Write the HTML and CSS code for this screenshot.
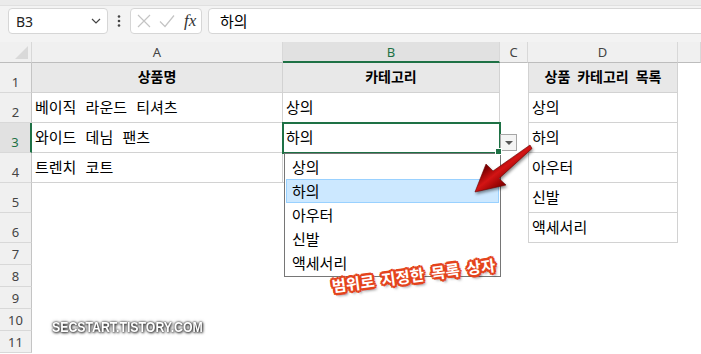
FILE: index.html
```html
<!DOCTYPE html>
<html lang="ko">
<head>
    <meta charset="UTF-8">
    <meta name="viewport" content="width=device-width, initial-scale=1.0">
    <title>데이터 유효성 검사 - 목록</title>
    <link rel="stylesheet" href="styles.css">
</head>
<body>

    <!-- 이름 상자 + 수식 입력줄 -->
    <div class="topbar">
        <div class="namebox">
            <span>B3</span>
            <svg width="10" height="6" viewBox="0 0 10 6"><path d="M1 1 L5 5 L9 1" fill="none" stroke="#444" stroke-width="1.2"/></svg>
        </div>
        <div class="dots">
            <svg width="4" height="12" viewBox="0 0 4 12"><circle cx="2" cy="1.5" r="1.3" fill="#444"/><circle cx="2" cy="6" r="1.3" fill="#444"/><circle cx="2" cy="10.5" r="1.3" fill="#444"/></svg>
        </div>
        <div class="fxbox">
            <svg width="14" height="14" viewBox="0 0 14 14"><path d="M1 1 L13 13 M13 1 L1 13" stroke="#c4c4c4" stroke-width="1.2"/></svg>
            <svg width="16" height="14" viewBox="0 0 16 14"><path d="M1 7.5 L6 12.5 L15 1.5" fill="none" stroke="#c4c4c4" stroke-width="1.2"/></svg>
            <span class="fx">fx</span>
        </div>
        <div class="formula">하의</div>
    </div>

    <!-- 시트 -->
    <div class="sheet">
        <div class="corner"><span class="tri"></span></div>
        <div class="colh">A</div>
        <div class="colh sel">B</div>
        <div class="colh">C</div>
        <div class="colh">D</div>
        <div class="colh"></div>

        <div class="rowh">1</div>
        <div class="cell t th">상품명</div>
        <div class="cell t th">카테고리</div>
        <div class="cell"></div>
        <div class="cell t d th">상품 카테고리 목록</div>
        <div class="cell"></div>

        <div class="rowh">2</div>
        <div class="cell t">베이직 라운드 티셔츠</div>
        <div class="cell t">상의</div>
        <div class="cell"></div>
        <div class="cell t d">상의</div>
        <div class="cell"></div>

        <div class="rowh sel">3</div>
        <div class="cell t">와이드 데님 팬츠</div>
        <div class="cell t active">하의
            <span class="dd-btn"></span>
            <ul class="dd-list">
                <li>상의</li>
                <li class="hover">하의</li>
                <li>아우터</li>
                <li>신발</li>
                <li>액세서리</li>
            </ul>
        </div>
        <div class="cell"></div>
        <div class="cell t d">하의</div>
        <div class="cell"></div>

        <div class="rowh">4</div>
        <div class="cell t">트렌치 코트</div>
        <div class="cell t"></div>
        <div class="cell"></div>
        <div class="cell t d">아우터</div>
        <div class="cell"></div>

        <div class="rowh">5</div>
        <div class="cell span3"></div>
        <div class="cell t d">신발</div>
        <div class="cell"></div>

        <div class="rowh">6</div>
        <div class="cell span3"></div>
        <div class="cell t d">액세서리</div>
        <div class="cell"></div>

        <div class="rowh">7</div><div class="cell span5"></div>
        <div class="rowh">8</div><div class="cell span5"></div>
        <div class="rowh">9</div><div class="cell span5"></div>
        <div class="rowh">10</div><div class="cell span5"></div>
        <div class="rowh">11</div><div class="cell span5"></div>
    </div>

    <!-- 설명용 화살표 -->
    <svg class="arrow" width="701" height="354" viewBox="0 0 701 354">
        <defs>
            <linearGradient id="red" x1="489" y1="166" x2="503" y2="184" gradientUnits="userSpaceOnUse">
                <stop offset="0" stop-color="#7d0000"/>
                <stop offset="0.45" stop-color="#d41414"/>
                <stop offset="1" stop-color="#8a0000"/>
            </linearGradient>
        </defs>
        <polygon points="530,145 493,171 486,164 475,192 506,185 499,178.5 532,148.5" fill="url(#red)" stroke="#6a0000" stroke-width="0.6" stroke-linejoin="round"/>
    </svg>

    <div class="note">범위로 지정한 목록 상자</div>
    <div class="watermark">SECSTART.TISTORY.COM</div>

</body>
</html>
```

FILE: styles.css
```css
body {
    margin: 0;
    width: 701px;
    height: 354px;
    overflow: hidden;
    position: relative;
    background-color: #fff;
    font-family: "Noto Sans CJK KR", "Noto Sans", sans-serif;
    color: #000;
}

/* 수식 입력줄 */
.topbar {
    height: 42px;
    box-sizing: border-box;
    padding: 8px 0 0 8px;
    display: flex;
    align-items: flex-start;
    background: linear-gradient(#ebebeb 0, #ebebeb 5px, #e0e0e0 5px, #e0e0e0 6px, #f3f3f3 6px);
}

.namebox, .fxbox, .formula {
    height: 26px;
    box-sizing: border-box;
    background-color: #fff;
    border: 1px solid #d6d6d6;
    border-radius: 4px;
}

.namebox {
    width: 100px;
    display: flex;
    align-items: center;
    justify-content: space-between;
    padding: 0 6px 0 7px;
    font-family: "Noto Sans", sans-serif;
    font-size: 14px;
    color: #222;
}

.dots {
    width: 22px;
    height: 26px;
    display: flex;
    align-items: center;
    justify-content: center;
}

.fxbox {
    width: 72px;
    display: flex;
    align-items: center;
    padding-left: 6px;
    gap: 8px;
}

.fx {
    font-family: "Liberation Serif", serif;
    font-style: italic;
    font-size: 17px;
    color: #333;
    margin-left: 1px;
}

.formula {
    flex: 1;
    margin-left: 6px;
    margin-right: -8px;
    padding-left: 11px;
    font-size: 15px;
    line-height: 24px;
}

/* 시트 격자 */
.sheet {
    display: grid;
    grid-template-columns: 32px 251px 217px 28px 150px 23px;
    grid-template-rows: 21px repeat(6, 30px) repeat(5, 22px);
}

.corner, .colh, .rowh {
    box-sizing: border-box;
    background-color: #f0f0f0;
    font-family: "Noto Sans", sans-serif;
    font-size: 13px;
    color: #444;
}

.corner {
    border-right: 1px solid #d8d8d8;
    border-bottom: 1px solid #bdbdbd;
    position: relative;
}

.tri {
    position: absolute;
    right: 3px;
    bottom: 3px;
    width: 0;
    height: 0;
    border-left: 13px solid transparent;
    border-bottom: 13px solid #d9d9d9;
}

.colh {
    border-right: 1px solid #d8d8d8;
    border-bottom: 1px solid #bdbdbd;
    display: flex;
    align-items: center;
    justify-content: center;
    line-height: 16px;
}

.colh.sel {
    background-color: #e1e1e1;
    border-bottom: 2px solid #1e7145;
    color: #1e7145;
}

.rowh {
    border-right: 1px solid #c4c4c4;
    border-bottom: 1px solid #d8d8d8;
    display: flex;
    align-items: flex-end;
    justify-content: center;
    line-height: 16px;
    padding-bottom: 2px;
}

.rowh.sel {
    background-color: #e1e1e1;
    border-right: 2px solid #1e7145;
    color: #1e7145;
}

.cell {
    box-sizing: border-box;
    display: flex;
    align-items: flex-end;
    padding: 0 3px 5px 3px;
    font-size: 15px;
    line-height: 20px;
    word-spacing: 5px;
    white-space: pre;
}

.span3 {
    grid-column: span 3;
}

.span5 {
    grid-column: span 5;
}

/* 표 테두리 */
.t {
    border-right: 1px solid #d2d2d2;
    border-bottom: 1px solid #d2d2d2;
}

.t.d {
    border-left: 1px solid #d2d2d2;
}

.th {
    background-color: #e8e8e8;
    font-size: 14px;
    font-weight: 700;
    word-spacing: 3px;
    justify-content: center;
    padding-bottom: 6px;
}

/* 활성 셀 + 드롭다운 */
.active {
    position: relative;
    z-index: 2;
    outline: 2px solid #1e7145;
    outline-offset: -1px;
    white-space: nowrap;
}

.active::after {
    content: "";
    position: absolute;
    right: -3px;
    bottom: -3px;
    width: 5px;
    height: 5px;
    background-color: #1e7145;
    border: 1px solid #fff;
}

.dd-btn {
    position: absolute;
    left: calc(100% + 1px);
    top: 11px;
    width: 17px;
    height: 17px;
    box-sizing: border-box;
    border: 1px solid #a6a6a6;
    background-color: #f4f4f4;
}

.dd-btn::after {
    content: "";
    position: absolute;
    left: 4px;
    top: 6px;
    border-left: 4px solid transparent;
    border-right: 4px solid transparent;
    border-top: 4px solid #555;
}

.dd-list {
    position: absolute;
    left: 1px;
    top: calc(100% + 1px);
    width: 217px;
    margin: 0;
    padding: 1px;
    list-style: none;
    box-sizing: border-box;
    background-color: #fff;
    border: 1px solid #767676;
}

.dd-list li {
    height: 24px;
    box-sizing: border-box;
    padding-left: 6px;
    line-height: 23px;
    font-size: 15px;
}

.dd-list li.hover {
    background-color: #cce8ff;
    border: 1px solid #99d1ff;
    padding-left: 5px;
    line-height: 21px;
}

/* 주석 */
.arrow {
    position: absolute;
    left: 0;
    top: 0;
    pointer-events: none;
    z-index: 5;
    filter: drop-shadow(1px 2px 1.5px rgba(0, 0, 0, 0.45));
}

.note {
    position: absolute;
    left: 331px;
    top: 264px;
    width: 174px;
    z-index: 5;
    transform: rotate(-7.5deg);
    font-size: 15.5px;
    font-weight: 700;
    line-height: 20px;
    word-spacing: 3px;
    color: #fff;
    white-space: nowrap;
    text-shadow:
        2.5px 0 #e4431c, -2.5px 0 #e4431c, 0 2.5px #e4431c, 0 -2.5px #e4431c,
        1.8px 1.8px #e4431c, -1.8px 1.8px #e4431c, 1.8px -1.8px #e4431c, -1.8px -1.8px #e4431c,
        2px 3px 3px rgba(0, 0, 0, 0.6);
}

.watermark {
    position: absolute;
    left: 52px;
    top: 317px;
    z-index: 5;
    font-family: "Liberation Sans", sans-serif;
    font-size: 15px;
    font-weight: 700;
    line-height: 20px;
    color: #fff;
    transform: scaleX(0.82);
    transform-origin: left center;
    text-shadow: 0 0 2px #222, 1px 1px 3px #333, 0 0 4px rgba(0, 0, 0, 0.5);
}
```
